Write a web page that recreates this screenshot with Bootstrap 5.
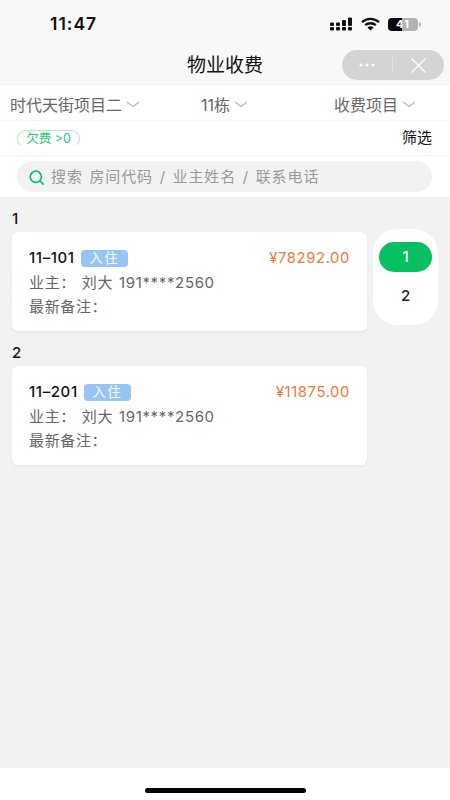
<!DOCTYPE html>
<html lang="zh">
<head>
<meta charset="utf-8">
<title>物业收费</title>
<link rel="stylesheet" href="https://cdn.jsdelivr.net/npm/bootstrap@5.3.0/dist/css/bootstrap.min.css">
<style>
html,body{height:100%;margin:0}
body{font-family:"Inter","Noto Sans CJK SC","Liberation Sans",sans-serif;background:#f2f2f2;overflow:hidden}
.phone{width:450px;height:800px}
.top-area{background:#f8f8f8;height:86px}
.status-bar{height:48px;padding:0 29px 0 50px;color:#111}
.clock{font-size:17.500px;font-weight:600;letter-spacing:1px;line-height:1}
.page-title{height:38px;position:relative;font-size:19px;color:#111;line-height:1;padding-bottom:4px}
.capsule{position:absolute;right:6px;top:2px;width:102px;height:30px;border-radius:15px;background:#d4d4d4}
.capsule-sep{width:1px;height:16px;background:#e2e2e2}
.capsule-slot{width:50px}
.battery{width:30px;height:13px;border-radius:4px;background:#b3b3b3;position:relative;overflow:hidden;font-size:11px;font-weight:700;color:#fff;line-height:13px;text-align:center}
.battery-fill{position:absolute;left:0;top:0;bottom:0;width:14px;background:#0a0a0a}
.battery-num{position:relative;letter-spacing:1px}
.battery-tip{width:2px;height:5px;background:#bbb;border-radius:0 2px 2px 0;margin-left:1px}
.filter-row{height:35px;background:#fff;border-bottom:1px solid #f5f5f5;padding:3px 0 0 10px;font-size:16px;color:#666}
.filter-a{width:191px}
.filter-b{width:133px}
.tag-row{height:35px;background:#fff;border-bottom:1px solid #f5f5f5;padding:1px 18px 0 17px}
.debt-tag{width:63px;height:18px;border:1px solid #a9e9c5;border-bottom-color:#fff;border-radius:9px;color:#2fc878;font-size:12.500px;line-height:16px;text-align:center}
.screen-link{font-size:15px;color:#111}
.search-row{height:41px;background:#fff;padding:5px 18px 5px 17px}
.search-box{height:31px;background:#f2f2f2;border-radius:15.500px;padding:1px 0 0 12px;color:#999;font-size:15px;letter-spacing:.9px;word-spacing:1.500px;gap:7px}
.list-area{position:relative;padding:13px 0 0 12px}
.group-num{font-size:15px;font-weight:500;color:#111;line-height:18px;height:18px}
.group-num.next{margin-top:13px}
.group-num+.room-card{margin-top:4px}
.room-card{width:355px;height:99px;background:#fff;border-radius:6px;box-shadow:0 1px 3px rgba(0,0,0,.06);padding:14px 17px;color:#666;font-size:15px;letter-spacing:.65px}
.room-line{height:24.500px;line-height:24px}
.room-code{color:#111;font-weight:500;font-size:15px;letter-spacing:.6px}
.room-owner{word-spacing:1px}
.live-tag{background:#97c5f1;color:#f3f8fd;border-radius:4px;width:47px;height:17px;line-height:17px;text-align:center;font-size:13.500px;letter-spacing:1.500px;margin-left:6px}
.fee{color:#f4773b;font-size:14.800px;letter-spacing:.6px}
.index-panel{position:absolute;right:12px;top:32px;width:65px;height:96px;background:#fff;border-radius:24px;padding-top:13px;font-size:15px;font-weight:500;color:#222}
.index-item{height:30px;width:53px;margin:0 auto 9px;line-height:30px;text-align:center;border-radius:15px}
.index-item.on{background:#07c160;color:#fff}
.bottom-bar{position:fixed;left:0;top:768px;width:450px;height:32px;background:#fff}
.home-bar{width:161px;height:5px;border-radius:3px;background:#000;margin-top:20px}
</style>
</head>
<body>
<div class="phone d-flex flex-column">
  <div class="top-area">
    <div class="status-bar d-flex align-items-center justify-content-between">
      <span class="clock">11:47</span>
      <div class="d-flex align-items-center gap-2">
        <svg width="23" height="14" viewBox="0 0 23 14"><g fill="#111"><rect x="0" y="5.500" width="4" height="3.500" rx="1"/><rect x="0" y="10" width="4" height="3.500" rx="1"/><rect x="6" y="5.500" width="4" height="3.500" rx="1"/><rect x="6" y="10" width="4" height="3.500" rx="1"/><rect x="12" y="3" width="4" height="6" rx="1"/><rect x="12" y="10" width="4" height="3.500" rx="1"/><rect x="18" y="0.500" width="4" height="8.500" rx="1"/><rect x="18" y="10" width="4" height="3.500" rx="1"/></g></svg>
        <svg width="19" height="14" viewBox="0 0 19 14" fill="none" stroke="#111" stroke-width="2.300"><path d="M1 5.200C6 .8 13 .8 18 5.200"/><path d="M4.200 8.200c3-2.600 7.600-2.600 10.600 0"/><path fill="#111" stroke="none" d="M9.500 9.200c1.200 0 2.300.4 3.100 1.200L9.500 13.600 6.400 10.400c.8-.8 1.900-1.200 3.100-1.200z"/></svg>
        <div class="d-flex align-items-center">
          <div class="battery"><div class="battery-fill"></div><span class="battery-num">41</span></div>
          <div class="battery-tip"></div>
        </div>
      </div>
    </div>
    <div class="page-title d-flex align-items-center justify-content-center">
      <span>物业收费</span>
      <div class="capsule d-flex align-items-center">
        <div class="capsule-slot d-flex justify-content-center">
          <svg width="16" height="4" viewBox="0 0 16 4"><g fill="#fff"><circle cx="2" cy="2" r="1.500"/><circle cx="8" cy="2" r="1.500"/><circle cx="14" cy="2" r="1.500"/></g></svg>
        </div>
        <div class="capsule-sep"></div>
        <div class="capsule-slot d-flex justify-content-center">
          <svg width="15" height="15" viewBox="0 0 15 15" stroke="#fff" stroke-width="1.200"><path d="M.5.5l14 14M14.500.5l-14 14"/></svg>
        </div>
      </div>
    </div>
  </div>

  <div class="filter-row d-flex align-items-center">
    <div class="filter-a d-flex align-items-center gap-1"><span>时代天街项目二</span><svg width="14" height="7" viewBox="0 0 14 7" fill="none" stroke="#bbb" stroke-width="1.300"><path d="M1 1l6 4.500L13 1"/></svg></div>
    <div class="filter-b d-flex align-items-center gap-1"><span>11栋</span><svg width="14" height="7" viewBox="0 0 14 7" fill="none" stroke="#bbb" stroke-width="1.300"><path d="M1 1l6 4.500L13 1"/></svg></div>
    <div class="d-flex align-items-center gap-1"><span>收费项目</span><svg width="14" height="7" viewBox="0 0 14 7" fill="none" stroke="#bbb" stroke-width="1.300"><path d="M1 1l6 4.500L13 1"/></svg></div>
  </div>

  <div class="tag-row d-flex align-items-center justify-content-between">
    <div class="debt-tag">欠费 &gt;0</div>
    <div class="screen-link">筛选</div>
  </div>

  <div class="search-row">
    <div class="search-box d-flex align-items-center">
      <svg width="15" height="15" viewBox="0 0 15 15" fill="none" stroke="#07c160" stroke-width="1.700"><circle cx="6.800" cy="6.800" r="5.600"/><path d="M11 11l3.200 3.200" stroke-linecap="round"/></svg>
      <span>搜索 房间代码 / 业主姓名 / 联系电话</span>
    </div>
  </div>

  <div class="list-area flex-grow-1">
    <div class="group-num">1</div>
    <div class="room-card">
      <div class="room-line d-flex align-items-center">
        <span class="room-code">11–101</span><span class="live-tag">入住</span><span class="fee ms-auto">¥78292.00</span>
      </div>
      <div class="room-line room-owner">业主： 刘大 191****2560</div>
      <div class="room-line">最新备注：</div>
    </div>
    <div class="group-num next">2</div>
    <div class="room-card">
      <div class="room-line d-flex align-items-center">
        <span class="room-code">11–201</span><span class="live-tag">入住</span><span class="fee ms-auto">¥11875.00</span>
      </div>
      <div class="room-line room-owner">业主： 刘大 191****2560</div>
      <div class="room-line">最新备注：</div>
    </div>
    <div class="index-panel">
      <div class="index-item on">1</div>
      <div class="index-item">2</div>
    </div>
  </div>
</div>
<div class="bottom-bar d-flex justify-content-center"><div class="home-bar"></div></div>
<script src="https://cdn.jsdelivr.net/npm/bootstrap@5.3.0/dist/js/bootstrap.bundle.min.js"></script>
</body>
</html>
